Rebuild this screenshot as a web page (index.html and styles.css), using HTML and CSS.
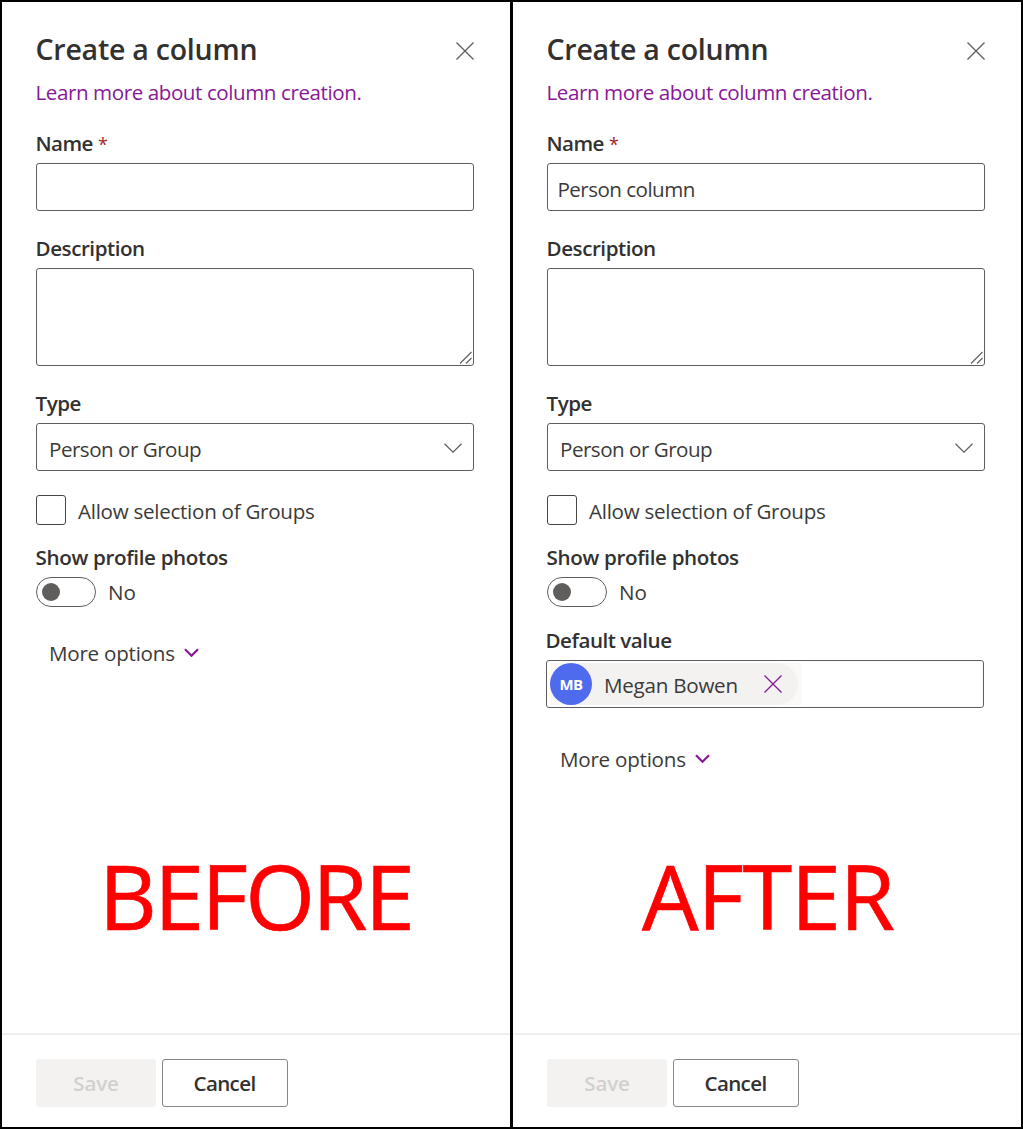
FILE: index.html
```
<!DOCTYPE html>
<html lang="en">
<head>
<meta charset="utf-8">
<title>Create a column</title>
<link rel="stylesheet" href="styles.css">
</head>
<body>
<main class="compare">
  <section class="panel">
    <header class="panel-head">
      <h1 class="title">Create a column</h1>
      <svg class="close" viewBox="0 0 18 18"><path d="M.5.5l17 17M17.5.5l-17 17"/></svg>
    </header>
    <a class="learn">Learn more about column creation.</a>
    <div class="label label-name">Name <span class="star">*</span></div>
    <div class="box input"></div>
    <div class="label label-desc">Description</div>
    <div class="box area"><svg class="grip" viewBox="0 0 14 14"><path d="M1 12.5L12.5 1M7 12.5L12.5 7"/></svg></div>
    <div class="label label-type">Type</div>
    <div class="box select"><span class="group">Person or Group</span><svg class="caret" viewBox="0 0 18 10"><path d="M.5.8L9 9.2 17.5.8"/></svg></div>
    <div class="check-row"><span class="check"></span><span class="check-text">Allow selection of Groups</span></div>
    <div class="label label-photos">Show profile photos</div>
    <div class="toggle-row"><span class="toggle"><span class="knob"></span></span><span class="no">No</span></div>
    <div class="more"><span>More options</span><svg class="chev" viewBox="0 0 15 10"><path d="M1 1.2l6.5 6.6L14 1.2"/></svg></div>
    <div class="mark before">BEFORE</div>
    <footer class="foot"><span class="btn save">Save</span><span class="btn cancel">Cancel</span></footer>
  </section>
  <section class="panel">
    <header class="panel-head">
      <h1 class="title">Create a column</h1>
      <svg class="close" viewBox="0 0 18 18"><path d="M.5.5l17 17M17.5.5l-17 17"/></svg>
    </header>
    <a class="learn">Learn more about column creation.</a>
    <div class="label label-name">Name <span class="star">*</span></div>
    <div class="box input">Person column</div>
    <div class="label label-desc">Description</div>
    <div class="box area"><svg class="grip" viewBox="0 0 14 14"><path d="M1 12.5L12.5 1M7 12.5L12.5 7"/></svg></div>
    <div class="label label-type">Type</div>
    <div class="box select"><span class="group">Person or Group</span><svg class="caret" viewBox="0 0 18 10"><path d="M.5.8L9 9.2 17.5.8"/></svg></div>
    <div class="check-row"><span class="check"></span><span class="check-text">Allow selection of Groups</span></div>
    <div class="label label-photos">Show profile photos</div>
    <div class="toggle-row"><span class="toggle"><span class="knob"></span></span><span class="no">No</span></div>
    <div class="label label-default">Default value</div>
    <div class="box picker">
      <div class="chip-back">
        <div class="chip">
          <span class="avatar">MB</span>
          <span class="person">Megan Bowen</span>
          <svg class="remove" viewBox="0 0 18 18"><path d="M.5.5l17 17M17.5.5l-17 17"/></svg>
        </div>
      </div>
    </div>
    <div class="more more-after"><span>More options</span><svg class="chev" viewBox="0 0 15 10"><path d="M1 1.2l6.5 6.6L14 1.2"/></svg></div>
    <div class="mark after">AFTER</div>
    <footer class="foot"><span class="btn save">Save</span><span class="btn cancel">Cancel</span></footer>
  </section>
</main>
</body>
</html>
```
FILE: styles.css
```
* { box-sizing: border-box; }
body {
  margin: 0;
  background: #fff;
  color: #3b3a39;
  font: 400 20.6px/30px "Open Sans", sans-serif;
}
svg { display: block; fill: none; flex: none; }
.compare {
  display: grid;
  grid-template-columns: 508px 508px;
  column-gap: 3px;
  width: 1023px;
  height: 1129px;
  padding: 2px;
  background: #000;
}
.panel {
  display: flex;
  flex-direction: column;
  background: #fff;
  padding: 32px 0 0 34px;
  white-space: nowrap;
}
.panel-head { display: flex; justify-content: space-between; width: 438px; height: 30px; }
.title {
  margin: 0 0 0 -0.5px;
  font-size: 28.5px;
  font-weight: 600;
  line-height: 30px;
  letter-spacing: -0.23px;
  color: #323130;
}
.close { width: 18px; height: 18px; margin-top: 8px; stroke: #605e5c; stroke-width: 1.3; }
.learn { margin: 13px 0 0 -0.5px; color: #881798; letter-spacing: -0.43px; }
.label { font-weight: 600; color: #323130; letter-spacing: -0.45px; margin-left: -0.5px; }
.label-name { margin-top: 21px; letter-spacing: -0.6px; }
.star { color: #a4262c; font-weight: 400; font-size: 18px; line-height: 1; margin-left: 0.5px; }
.label-desc { margin-top: 22px; }
.label-type { margin-top: 22px; letter-spacing: -0.49px; }
.label-photos { margin-top: 17px; letter-spacing: -0.34px; }
.label-default { margin: 18px 0 0 -1.5px; letter-spacing: -0.48px; }
.box {
  width: 438px;
  height: 48px;
  border: 1px solid #605e5c;
  border-radius: 3px;
}
.input { margin-top: 5px; padding: 10px 9px 0 9.5px; letter-spacing: -0.54px; }
.area { height: 98px; margin-top: 5px; display: flex; justify-content: flex-end; align-items: flex-end; }
.grip { width: 14px; height: 14px; stroke: #605e5c; stroke-width: 1.1; }
.select { margin-top: 5px; padding: 4px 11px 0 12px; display: flex; justify-content: space-between; align-items: center; letter-spacing: -0.5px; }
.caret { width: 18px; height: 10px; margin-top: -3px; stroke: #605e5c; stroke-width: 1.2; }
.check-row { display: flex; height: 30px; margin-top: 24px; }
.check { width: 30px; height: 30px; border: 1.5px solid #484644; border-radius: 3px; }
.check-text { margin: 1px 0 0 12px; letter-spacing: -0.279px; }
.toggle-row { display: flex; height: 30px; margin-top: 5px; }
.toggle {
  display: flex;
  align-items: center;
  width: 60px;
  height: 30px;
  padding-left: 5px;
  border: 1px solid #605e5c;
  border-radius: 15px;
}
.knob { width: 18px; height: 18px; border-radius: 50%; background: #605e5c; }
.no { margin-left: 12px; }
.picker { margin: 5px 0 0 -1px; display: flex; align-items: center; padding-left: 3px; }
.chip-back { width: 252px; height: 42px; background: #faf9f8; }
.chip { display: flex; align-items: center; width: 248px; height: 42px; border-radius: 21px; background: #f3f2f1; }
.avatar {
  width: 42px;
  height: 42px;
  border-radius: 50%;
  background: #4f6bed;
  color: #fff;
  font-size: 15px;
  font-weight: 700;
  line-height: 42px;
  text-align: center;
  letter-spacing: -0.5px;
}
.person { margin: 2px 0 0 12px; width: 160px; letter-spacing: -0.25px; }
.remove { width: 18px; height: 18px; stroke: #881798; stroke-width: 1.3; }
.more { display: flex; align-items: center; margin: 31px 0 0 13px; height: 30px; letter-spacing: -0.24px; }
.more-after { margin-top: 36px; }
.chev { width: 15px; height: 10px; margin-left: 9px; stroke: #881798; stroke-width: 2.2; }
.mark {
  margin-top: auto;
  margin-bottom: 88px;
  font-size: 89.6px;
  line-height: 100px;
  color: #f00;
  -webkit-text-stroke: 0.7px #f00;
}
.before { padding-left: 63px; letter-spacing: -2.58px; }
.after { padding-left: 95px; letter-spacing: -1.05px; }
.foot {
  display: flex;
  gap: 6px;
  height: 94px;
  margin-left: -34px;
  padding: 24px 0 0 34px;
  border-top: 2px solid #f0efee;
}
.btn { height: 48px; line-height: 48px; text-align: center; border-radius: 3px; font-weight: 600; }
.save { width: 120px; background: #f3f2f1; color: #d2d0ce; letter-spacing: -0.2px; }
.cancel { width: 126px; line-height: 46px; border: 1px solid #8a8886; color: #323130; letter-spacing: -0.65px; padding-right: 1px; }
```
